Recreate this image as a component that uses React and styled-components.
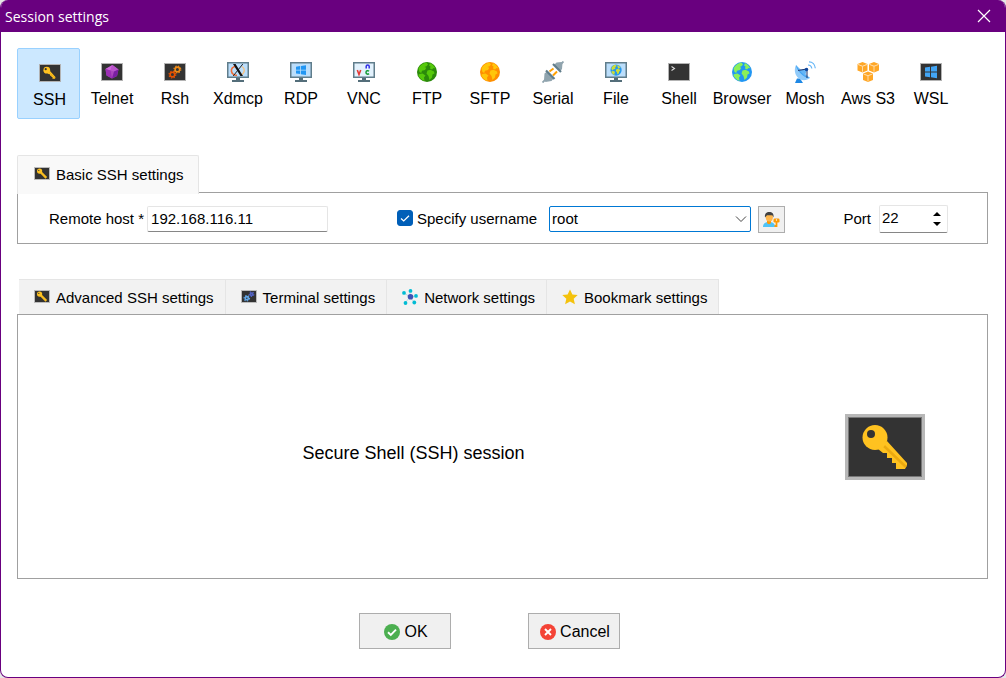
import React, { useState } from 'react';
import styled, { createGlobalStyle } from 'styled-components';

const GlobalStyle = createGlobalStyle`
  * {
    box-sizing: border-box;
  }

  body {
    margin: 0;
    background: #e6e6e6;
    color: #000;
    font-family: 'Liberation Sans', Arial, sans-serif;
    font-size: 15px;
  }

  button, input, select {
    font: inherit;
    color: inherit;
  }
`;

const Window = styled.div`
  display: flex;
  flex-direction: column;
  min-height: 100vh;
  background: #fff;
  border: 1px solid #69007f;
  border-top: none;
  border-radius: 8px;
  overflow: hidden;
`;

const TitleBar = styled.header`
  display: flex;
  align-items: center;
  justify-content: space-between;
  height: 32px;
  padding: 0 14px 0 4px;
  background: #69007f;
  color: #fff;
`;

const Title = styled.h1`
  margin: 0;
  font-family: 'Open Sans', sans-serif;
  font-size: 14px;
  font-weight: 400;
`;

const CloseButton = styled.button`
  display: flex;
  padding: 0;
  border: none;
  background: none;
  color: #fff;
`;

const Content = styled.main`
  display: flex;
  flex: 1;
  flex-direction: column;
  padding: 16px 17px 28px 16px;
`;

const Toolbar = styled.nav`
  display: flex;
`;

const SessionButton = styled.button`
  display: flex;
  flex-direction: column;
  align-items: center;
  justify-content: center;
  gap: 6px;
  width: 63px;
  height: 71px;
  padding: ${props => (props.$active ? '4px 0 0 2px' : '2px 0 0 1px')};
  border: 1px solid ${props => (props.$active ? '#99d1ff' : 'transparent')};
  border-radius: 2px;
  background: ${props => (props.$active ? '#cce8ff' : 'none')};
  font-size: 16px;
  line-height: 20px;
  white-space: nowrap;
`;

const BasicSection = styled.section`
  margin-top: 36px;
`;

const BasicTab = styled.h2`
  display: flex;
  align-items: center;
  gap: 6px;
  position: relative;
  width: max-content;
  height: 39px;
  margin: 0 0 -2px;
  padding: 0 14px 2px 16px;
  border: 1px solid #e5e5e5;
  border-bottom: none;
  border-radius: 2px 2px 0 0;
  background: #f9f9f9;
  font-size: 15px;
  font-weight: 400;
`;

const BasicPanel = styled.div`
  display: grid;
  grid-template-columns: 348px 1fr auto;
  align-items: center;
  height: 52px;
  padding: 2px 39px 0 31px;
  border: 1px solid #a0a0a0;
`;

const Field = styled.div`
  display: flex;
  align-items: center;
  gap: ${props => props.$gap || 3}px;
`;

const Label = styled.label`
  padding-bottom: 2px;
`;

const TextInput = styled.input`
  width: 181px;
  height: 26px;
  padding: 0 3px 2px;
  border: 1px solid #e5e5e5;
  border-bottom-color: #868686;
  border-radius: 2px;
  background: #fff;
  outline: none;
`;

const CheckLabel = styled(Label)`
  display: flex;
  align-items: center;
  gap: 4px;
  margin-right: 5px;
`;

const Checkbox = styled.input`
  appearance: none;
  width: 16px;
  height: 16px;
  margin: 0;
  border: 1px solid #005fb8;
  border-radius: 3px;
  background: #fff;

  &:checked {
    background: #005fb8;
  }
`;

const CheckWrap = styled.span`
  display: grid;

  & > * {
    grid-area: 1 / 1;
  }

  svg {
    pointer-events: none;
  }
`;

const SelectWrap = styled.div`
  display: grid;
  align-items: center;

  & > * {
    grid-area: 1 / 1;
  }

  svg {
    justify-self: end;
    margin-right: 4px;
    pointer-events: none;
  }
`;

const Select = styled.select`
  appearance: none;
  width: 202px;
  height: 26px;
  padding: 0 20px 2px 2px;
  border: 1px solid #0078d4;
  border-radius: 2px;
  background: #fff;
  outline: none;
`;

const UserButton = styled.button`
  display: flex;
  align-items: center;
  justify-content: center;
  width: 27px;
  height: 27px;
  padding: 0;
  border: 1px solid #adadad;
  background: #f0f0f0;
`;

const Spinner = styled.div`
  display: flex;
  width: 69px;
  height: 28px;
  border: 1px solid #e5e5e5;
  border-bottom-color: #868686;
  border-radius: 2px;
`;

const SpinnerInput = styled.input`
  appearance: textfield;
  flex: 1;
  min-width: 0;
  padding: 0 2px 3px;
  border: none;
  background: none;
  outline: none;

  &::-webkit-inner-spin-button {
    appearance: none;
  }
`;

const SpinnerArrows = styled.div`
  display: flex;
  flex-direction: column;
  justify-content: center;
  gap: 6px;
  width: 21px;
`;

const ArrowButton = styled.button`
  display: flex;
  justify-content: center;
  padding: 0;
  border: none;
  background: none;
`;

const DetailSection = styled.section`
  display: flex;
  flex: 1;
  flex-direction: column;
  margin-top: 35px;
`;

const TabList = styled.div`
  display: flex;
  margin-left: 2px;
`;

const Tab = styled.button`
  display: flex;
  align-items: center;
  gap: 6px;
  height: 35px;
  padding: 0 11px 0 15px;
  border: solid #e5e5e5;
  border-width: 1px 1px 0 0;
  background: #f2f2f2;
  white-space: nowrap;
`;

const DetailPanel = styled.div`
  display: grid;
  flex: 1;
  grid-template-columns: 1fr 80px;
  align-items: center;
  min-height: 200px;
  padding: 0 62px 0 32px;
  border: 1px solid #a0a0a0;
`;

const SessionName = styled.p`
  margin: 14px 68px 0 0;
  font-size: 18px;
  text-align: center;
`;

const Actions = styled.footer`
  display: flex;
  justify-content: center;
  gap: 77px;
  margin-top: 34px;
  padding-right: 26px;
`;

const ActionButton = styled.button`
  display: flex;
  align-items: center;
  justify-content: center;
  gap: 4px;
  width: 92px;
  height: 36px;
  padding: 1px 0 0 2px;
  border: 1px solid #adadad;
  background: #f0f0f0;
  font-size: 16px;
`;

const Svg = ({ w = 22, h = 22, box, children }) => (
  <svg width={w} height={h} viewBox={box || `0 0 ${w} ${h}`} fill="none" aria-hidden="true">
    {children}
  </svg>
);

const Screen = () => (
  <rect x="0.5" y="2.5" width="21" height="17" fill="#333" stroke="#b3b3b3" />
);

const Monitor = ({ fill = '#bbdefb' }) => (
  <>
    <path d="M9 16h4v3h4v2H5v-2h4z" fill="#546e7a" />
    <rect x="0.75" y="1.75" width="20.5" height="14.5" fill={fill} stroke="#607d8b" strokeWidth="1.5" />
  </>
);

const KeyShape = () => (
  <>
    <path d="M33 35l9-8 20 22v2l-2 4h-9v-6h-4v-5h-5v-5h-4z" fill="#ffc220" />
    <path d="M39 32l22 21" stroke="#eba910" strokeWidth="2.5" />
    <circle cx="30" cy="23.500" r="12.500" fill="#ffc220" />
    <circle cx="26" cy="20" r="4" fill="#333" />
  </>
);

const KeyIcon = ({ w = 22, h = 22 }) => (
  <Svg w={w} h={h}>
    <Screen />
    <g transform="translate(-0.3 1.8) scale(0.27)">
      <KeyShape />
    </g>
  </Svg>
);

const SmallKeyIcon = () => (
  <Svg w={16} h={16}>
    <rect x="0.5" y="1.5" width="15" height="12" fill="#333" stroke="#bcbcbc" />
    <path d="M6.5 6l5.800 5.800" stroke="#f9bd20" strokeWidth="2.4" />
    <circle cx="5.6" cy="5.1" r="2.6" fill="#ffc220" />
    <circle cx="4.8" cy="4.4" r="0.6" fill="#333" />
  </Svg>
);

const LargeKeyIcon = () => (
  <Svg w={80} h={66}>
    <rect width="80" height="66" fill="#b8b8b8" />
    <rect x="3.5" y="3.5" width="73" height="59" fill="#333" stroke="#777" />
    <KeyShape />
  </Svg>
);

const TelnetIcon = () => (
  <Svg>
    <Screen />
    <path d="M11.500 4l6 4.500-1.500 6.500-5 2.500-5.500-3L4.500 8z" fill="#ab47bc" />
    <path d="M11.500 4L4.500 8l5 1.500z" fill="#ce65dc" />
    <path d="M11.500 4l6 4.500-4.500 2-3.500-1z" fill="#ba55cc" />
    <path d="M17.500 8.500L16 15l-5 2.500 2-7z" fill="#7b1fa2" />
    <path d="M4.500 8l1 6.500 5.500 3-1.500-8z" fill="#9c2fb4" />
  </Svg>
);

const Gear = ({ x, y, r, color }) => (
  <g transform={`translate(${x} ${y})`} stroke={color}>
    <circle r={r} strokeWidth="1.6" />
    <circle r={r + 1.1} strokeWidth="1.2" strokeDasharray="1.3 1.4" />
  </g>
);

const RshIcon = () => (
  <Svg>
    <Screen />
    <Gear x={13.4} y={8.4} r={2.3} color="#ef8b16" />
    <Gear x={8.4} y={13.6} r={2.3} color="#e65100" />
  </Svg>
);

const XdmcpIcon = () => (
  <Svg>
    <Monitor />
    <path d="M9 5.2C5.500 5.500 4 8 4.500 10.500S7.500 14.500 10 14.200" stroke="#ef6c35" strokeWidth="1.6" />
    <path d="M15 5.500c3 2 3.500 6-1 8.500" stroke="#f6c184" strokeWidth="1.400" />
    <path d="M6 3h2.600L16 15h-2.600z" fill="#111" />
    <path d="M15.800 3L6.200 15" stroke="#111" strokeWidth="0.900" />
  </Svg>
);

const RdpIcon = () => (
  <Svg>
    <Monitor />
    <path d="M6 5.700l4.200-.6v3.600H6zM11 5l5-.8v4.500h-5zM6 9.500h4.200v3.600L6 12.500zM11 9.500h5V14l-5-.8z" fill="#2196f3" />
  </Svg>
);

const VncIcon = () => (
  <Svg>
    <Monitor fill="#e3f2fd" />
    <path d="M4.300 9l1.700 4.500L7.700 9" stroke="#e53935" strokeWidth="1.600" />
    <path d="M13.200 7.500V5.200c0-1.600 3-1.600 3 0v2.300" stroke="#3030e8" strokeWidth="1.500" />
    <path d="M16 10.200c-1-1-3-.6-3 1.200s2 2.200 3 1.200" stroke="#159a35" strokeWidth="1.500" />
  </Svg>
);

const GlobeShape = ({ sea, land }) => (
  <>
    <circle cx="11" cy="11" r="10" fill={sea} />
    <path
      d="M2.500 7.500C4 4 7 2 10.500 1.500l1.500 2-1.500 1.700L8.500 6l1.800.8L9 9l-3 .8-.8 2.200-1.700-1zM14 2l3 2 2.500 3.500-2-.5-1.500 1.500-2-1 .5-2-1.500-1zM11.500 9.500l3-.8 3.500 1.800.5 2-2 1-.5 3-2.500 2.500-1-4-2-2.500zM3.500 13l3-.5 3 2-1.500 2 .5 3.500C5.500 19 3 16.500 2.300 14z"
      fill={land}
    />
  </>
);

const GlobeIcon = ({ sea, land }) => (
  <Svg>
    <GlobeShape sea={sea} land={land} />
  </Svg>
);

const FileIcon = () => (
  <Svg>
    <Monitor />
    <g transform="translate(4.900 2.900) scale(0.560)">
      <GlobeShape sea="#2196f3" land="#cddc39" />
    </g>
  </Svg>
);

const SerialIcon = () => (
  <Svg>
    <path d="M18 4l3.500-3.500M.5 21.500L4 18" stroke="#90a4ae" strokeWidth="1.800" />
    <path d="M7.500 10.500l4-3M11 14.500l4-4" stroke="#ffa000" strokeWidth="2" />
    <path d="M12 4l2.500-2.500 5-.5 1 1-.5 6-2 2.500zM2.500 12.500L5 10.500 12 17l-2.500 3-6 1-1.500-2z" fill="#90a4ae" />
    <path d="M11 3l8 8M4 9.500l8.500 8.500" stroke="#607d8b" strokeWidth="2.200" />
  </Svg>
);

const ShellIcon = () => (
  <Svg>
    <Screen />
    <path d="M3.500 5.500l3 2-3 2" stroke="#ddd" strokeWidth="1.100" />
  </Svg>
);

const MoshIcon = () => (
  <Svg>
    <path d="M3 17.500h3l3 4.500H1z" fill="#1e88e5" />
    <path d="M2 4C-1 10 2 17.500 8 19c3.500.7 6.500-1 8-2z" fill="#90caf9" />
    <path d="M2 4c0 5 8 13.500 14 13C10 14 5 9 2 4z" fill="#42a5f5" />
    <path d="M5 9l8-1-2 7z" fill="#64b5f6" />
    <path d="M4 9.500l9-1.500v9" stroke="#263f75" strokeWidth="1.100" />
    <circle cx="12.500" cy="8.500" r="1.700" fill="#0d47a1" />
    <path d="M14 4c2 0 3.500 1.500 3.800 3.500M15 .8c3.500 0 6 2.800 6.300 6.500" stroke="#64b5f6" strokeWidth="1.200" />
  </Svg>
);

const Cube = ({ x, y }) => (
  <g transform={`translate(${x} ${y})`}>
    <path d="M5 0l5 2-5 2-5-2z" fill="#ffa726" />
    <path d="M0 2l5 2v6.500L0 8.500zM10 2L5 4v6.500l5-2z" fill="#ffa726" />
    <path d="M.5 2.500L5 4.300l4.500-1.800M5 4.300v5.500" stroke="#ffe0b2" strokeWidth="0.900" />
  </g>
);

const AwsIcon = () => (
  <Svg>
    <Cube x={0.500} y={1} />
    <Cube x={12} y={1} />
    <Cube x={6} y={10.500} />
  </Svg>
);

const WslIcon = () => (
  <Svg>
    <Screen />
    <path d="M5 6.500l5-.7v4.700H5zM11 5.700l6-1v5.800h-6zM5 11.500h5v4.700l-5-.7zM11 11.500h6v5.800l-6-1z" fill="#42a5f5" />
  </Svg>
);

const TerminalIcon = () => (
  <Svg w={16} h={16}>
    <rect x="0.500" y="1.500" width="15" height="12" fill="#333" stroke="#bcbcbc" />
    <Gear x={10.500} y={5.200} r={1.200} color="#5363c4" />
    <Gear x={5.800} y={9.200} r={1.600} color="#64a9ea" />
  </Svg>
);

const NetworkIcon = () => (
  <Svg w={16} h={16}>
    <path d="M8 8L2 4M8 8V2M8 8l6-1M8 8l-5 6M8 8l5 6" stroke="#b9dbe6" strokeWidth="1" />
    <circle cx="8.500" cy="7.800" r="2.800" fill="#3f51b5" />
    <g fill="#00bcd4">
      <circle cx="2" cy="3.900" r="1.900" />
      <circle cx="8.500" cy="1.900" r="1.900" />
      <circle cx="14" cy="6.900" r="1.900" />
      <circle cx="3.500" cy="14" r="1.900" />
      <circle cx="12.300" cy="13.500" r="1.900" />
    </g>
  </Svg>
);

const StarIcon = () => (
  <Svg w={16} h={16}>
    <path d="M8 .5l2.400 5 5.300.6-4 3.700 1.200 5.500L8 12.500l-4.900 2.800 1.200-5.500-4-3.700 5.300-.6z" fill="#f4c20d" />
  </Svg>
);

const UserKeyIcon = () => (
  <Svg w={17} h={17}>
    <path d="M0 16c0-3.500 2-5 6-5s6 1.500 6 5z" fill="#4fc3f7" />
    <path d="M4 9h4v3c-1 1.500-3 1.500-4 0z" fill="#ff9800" />
    <ellipse cx="6.300" cy="6.300" rx="3.600" ry="4.200" fill="#ffb74d" />
    <path d="M2 6.500C1.500 2.500 3.500 1 6.300 1s4.800 1.500 4.200 5.500L9.300 4.200H4z" fill="#424242" />
    <path d="M13.500 10v6M13.500 15h-2" stroke="#fb9a05" strokeWidth="1.800" />
    <rect x="10.500" y="7.500" width="6" height="4" rx="1.200" fill="#fb9a05" />
    <circle cx="13.500" cy="9" r="0.700" fill="#fff" />
  </Svg>
);

const OkIcon = () => (
  <Svg w={16} h={16}>
    <circle cx="8" cy="8" r="8" fill="#4caf50" />
    <path d="M4 8.300l2.800 2.700L12 5.700" stroke="#fff" strokeWidth="1.900" />
  </Svg>
);

const CancelIcon = () => (
  <Svg w={16} h={16}>
    <circle cx="8" cy="8" r="8" fill="#f44336" />
    <path d="M5 5l6 6M11 5l-6 6" stroke="#fff" strokeWidth="1.900" />
  </Svg>
);

const sessions = [
  { name: 'SSH', icon: <KeyIcon /> },
  { name: 'Telnet', icon: <TelnetIcon /> },
  { name: 'Rsh', icon: <RshIcon /> },
  { name: 'Xdmcp', icon: <XdmcpIcon /> },
  { name: 'RDP', icon: <RdpIcon /> },
  { name: 'VNC', icon: <VncIcon /> },
  { name: 'FTP', icon: <GlobeIcon sea="#2b8a0b" land="#56c90b" /> },
  { name: 'SFTP', icon: <GlobeIcon sea="#ff8f00" land="#ffc60a" /> },
  { name: 'Serial', icon: <SerialIcon /> },
  { name: 'File', icon: <FileIcon /> },
  { name: 'Shell', icon: <ShellIcon /> },
  { name: 'Browser', icon: <GlobeIcon sea="#2196f3" land="#8bf05a" /> },
  { name: 'Mosh', icon: <MoshIcon /> },
  { name: 'Aws S3', icon: <AwsIcon /> },
  { name: 'WSL', icon: <WslIcon /> },
];

const tabs = [
  { name: 'Advanced SSH settings', icon: <SmallKeyIcon /> },
  { name: 'Terminal settings', icon: <TerminalIcon /> },
  { name: 'Network settings', icon: <NetworkIcon /> },
  { name: 'Bookmark settings', icon: <StarIcon /> },
];

const App = () => {
  const [session, setSession] = useState('SSH');
  const [host, setHost] = useState('192.168.116.11');
  const [withUser, setWithUser] = useState(true);
  const [port, setPort] = useState(22);

  return (
    <>
      <GlobalStyle />
      <Window>
        <TitleBar>
          <Title>Session settings</Title>
          <CloseButton aria-label="Close">
            <Svg w={14} h={14}>
              <path d="M1 1l12 12M13 1L1 13" stroke="#fff" strokeWidth="1.200" />
            </Svg>
          </CloseButton>
        </TitleBar>

        <Content>
          <Toolbar>
            {sessions.map(item => (
              <SessionButton
                key={item.name}
                $active={item.name === session}
                onClick={() => setSession(item.name)}
              >
                {item.icon}
                {item.name}
              </SessionButton>
            ))}
          </Toolbar>

          <BasicSection>
            <BasicTab>
              <SmallKeyIcon />
              Basic SSH settings
            </BasicTab>
            <BasicPanel>
              <Field>
                <Label htmlFor="host">Remote host *</Label>
                <TextInput id="host" value={host} onChange={e => setHost(e.target.value)} />
              </Field>
              <Field $gap={7}>
                <CheckLabel>
                  <CheckWrap>
                    <Checkbox
                      type="checkbox"
                      checked={withUser}
                      onChange={e => setWithUser(e.target.checked)}
                    />
                    {withUser && (
                      <Svg w={16} h={16}>
                        <path d="M4 8.500l2.700 2.500L12 5.800" stroke="#fff" strokeWidth="1.200" />
                      </Svg>
                    )}
                  </CheckWrap>
                  Specify username
                </CheckLabel>
                <SelectWrap>
                  <Select aria-label="Username" disabled={!withUser}>
                    <option>root</option>
                  </Select>
                  <Svg w={12} h={8}>
                    <path d="M1 1.500l5 5 5-5" stroke="#444" />
                  </Svg>
                </SelectWrap>
                <UserButton aria-label="Manage users">
                  <UserKeyIcon />
                </UserButton>
              </Field>
              <Field $gap={8}>
                <Label htmlFor="port">Port</Label>
                <Spinner>
                  <SpinnerInput
                    id="port"
                    type="number"
                    value={port}
                    onChange={e => setPort(Number(e.target.value))}
                  />
                  <SpinnerArrows>
                    <ArrowButton aria-label="Increase port" onClick={() => setPort(port + 1)}>
                      <Svg w={8} h={4}>
                        <path d="M0 4l4-4 4 4z" fill="#000" />
                      </Svg>
                    </ArrowButton>
                    <ArrowButton aria-label="Decrease port" onClick={() => setPort(port - 1)}>
                      <Svg w={8} h={4}>
                        <path d="M0 0l4 4 4-4z" fill="#000" />
                      </Svg>
                    </ArrowButton>
                  </SpinnerArrows>
                </Spinner>
              </Field>
            </BasicPanel>
          </BasicSection>

          <DetailSection>
            <TabList>
              {tabs.map(tab => (
                <Tab key={tab.name}>
                  {tab.icon}
                  {tab.name}
                </Tab>
              ))}
            </TabList>
            <DetailPanel>
              <SessionName>Secure Shell (SSH) session</SessionName>
              <LargeKeyIcon />
            </DetailPanel>
          </DetailSection>

          <Actions>
            <ActionButton>
              <OkIcon />
              OK
            </ActionButton>
            <ActionButton>
              <CancelIcon />
              Cancel
            </ActionButton>
          </Actions>
        </Content>
      </Window>
    </>
  );
};

export default App;
